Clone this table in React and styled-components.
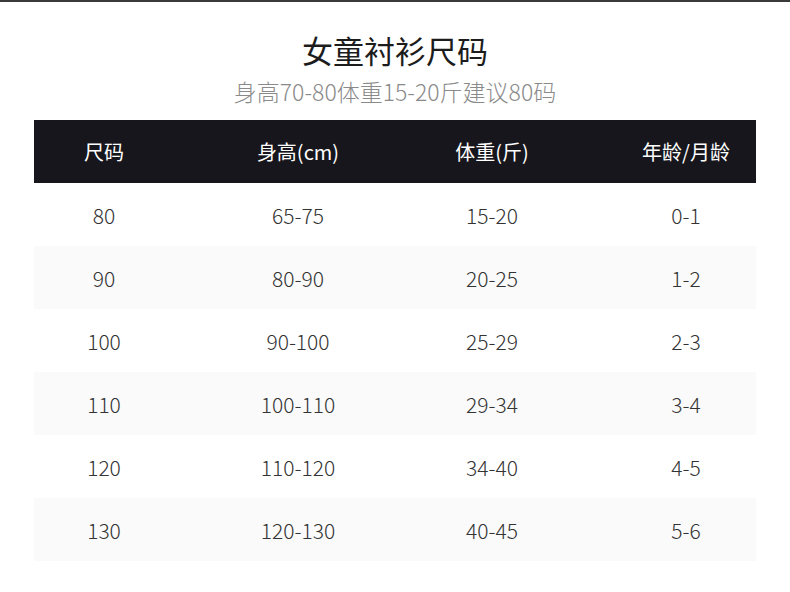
import styled, { createGlobalStyle } from 'styled-components';

const GlobalStyle = createGlobalStyle`
  html, body {
    margin: 0;
    padding: 0;
    background: #ffffff;
  }
  body {
    font-family: "Noto Sans CJK SC", "Noto Sans", sans-serif;
  }
`;

const Page = styled.div`
  width: 790px;
  height: 592px;
  border-top: 2px solid #3a3a3a;
  box-sizing: border-box;
  display: flex;
  flex-direction: column;
  align-items: center;
`;

const Title = styled.h1`
  margin: 27px 0 0;
  font-size: 31px;
  font-weight: 400;
  line-height: 42px;
  color: #1c1c1c;
`;

const Subtitle = styled.p`
  margin: 5px 0 0;
  font-size: 23px;
  font-weight: 300;
  line-height: 30px;
  color: #8a8a8a;
`;

const Table = styled.div`
  margin-top: 14px;
  width: 722px;
`;

const Row = styled.div`
  display: grid;
  grid-template-columns: repeat(4, 140px);
  column-gap: 54px;
  height: 63px;
  align-items: center;
  background: ${props => (props.head ? '#16161c' : props.shaded ? '#fafafa' : '#ffffff')};
  color: ${props => (props.head ? '#ffffff' : '#333333')};
  font-size: ${props => (props.head ? '20px' : '21px')};
  font-weight: ${props => (props.head ? 400 : 300)};
`;

const Cell = styled.div`
  text-align: center;
`;

const head = ['尺码', '身高(cm)', '体重(斤)', '年龄/月龄'];

const rows = [
  ['80', '65-75', '15-20', '0-1'],
  ['90', '80-90', '20-25', '1-2'],
  ['100', '90-100', '25-29', '2-3'],
  ['110', '100-110', '29-34', '3-4'],
  ['120', '110-120', '34-40', '4-5'],
  ['130', '120-130', '40-45', '5-6']
];

const App = () => (
  <>
    <GlobalStyle />
    <Page>
      <Title>女童衬衫尺码</Title>
      <Subtitle>身高70-80体重15-20斤建议80码</Subtitle>
      <Table>
        <Row head>
          {head.map(h => (
            <Cell key={h}>{h}</Cell>
          ))}
        </Row>
        {rows.map((r, i) => (
          <Row key={r[0]} shaded={i % 2 === 1}>
            {r.map((c, j) => (
              <Cell key={j}>{c}</Cell>
            ))}
          </Row>
        ))}
      </Table>
    </Page>
  </>
);

export default App;
